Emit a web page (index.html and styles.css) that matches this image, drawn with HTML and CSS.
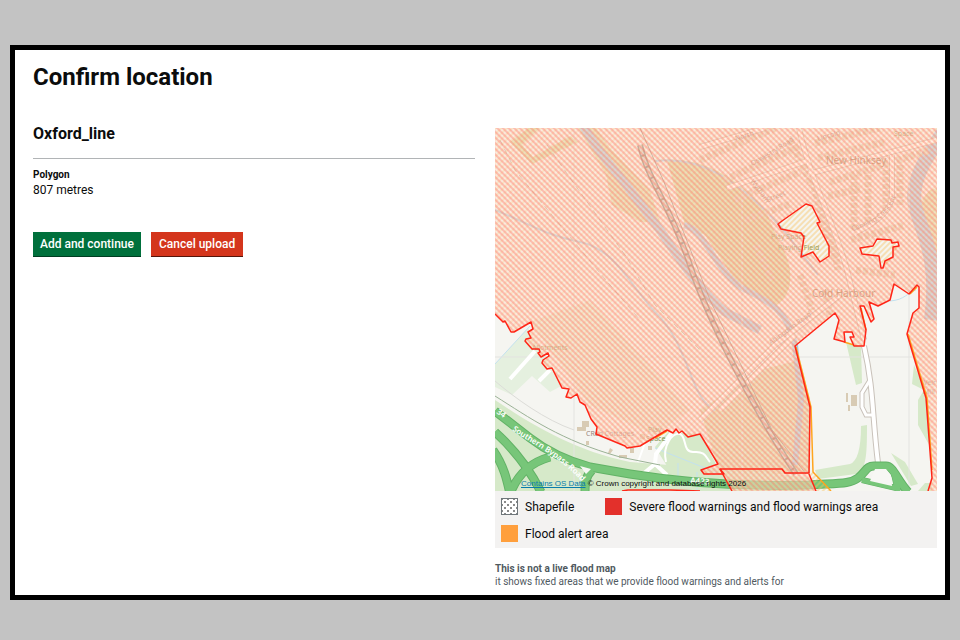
FILE: index.html
```html
<!DOCTYPE html>
<html lang="en">
<head>
<meta charset="utf-8">
<meta name="viewport" content="width=device-width, initial-scale=1">
<title>Confirm location</title>
<link rel="stylesheet" href="styles.css">
</head>
<body>
<main class="frame">
  <h1 class="title">Confirm location</h1>
  <div class="columns">
    <section class="details">
      <h2 class="name">Oxford_line</h2>
      <dl class="summary">
        <dt>Polygon</dt>
        <dd>807 metres</dd>
      </dl>
      <div class="actions">
        <button class="button" type="button">Add and continue</button>
        <button class="button button-warning" type="button">Cancel upload</button>
      </div>
    </section>
    <section class="location">
      <div class="map">
        <svg class="map-image" viewBox="495 128 442 363" preserveAspectRatio="xMidYMid slice" role="img" aria-label="Map of flood areas near New Hinksey and Cold Harbour">
          <defs>
            <pattern id="red-hatch" width="4" height="4" patternUnits="userSpaceOnUse" patternTransform="rotate(-45)">
              <rect width="2" height="4" fill="#ff6c62" opacity=".36"/>
            </pattern>
            <pattern id="orange-hatch" width="4" height="4" patternUnits="userSpaceOnUse" patternTransform="rotate(45)">
              <rect width="2" height="4" fill="#f8c060" opacity=".42"/>
            </pattern>
            <path id="flood" d="M495 128H937V491H928L932 478 926 398 907 334 913 313 919 308V287L917 285 909 294 894 284 890 300 878 306 869 302 874 319 871 322 864 307 860 306 866 330 864 346H854L850 337H854L852 333H844L845 342 834 339 839 320 835 313 795 346 810 407 809 474 816 491H732L720 469 724 475H704L701 470 718 464 700 434 688 437 682 431 679 433 676 429 673 433 667 430 640 446 627 448 625 446 596 434 597 427 591 419 585 405 580 402 577 394 571 398 566 397 569 389 562 388 552 368 547 369 542 363 543 360 549 356 548 353 541 357 538 353 540 352 539 349H532L525 341 526 339 531 338 528 332 533 329 531 322 514 332H511L505 321 503 322 495 314ZM778 224 782 221 806 204 812 206 820 222 817 223 829 246V256L820 262 813 252 801 257 804 237 801 233 781 229ZM860 248 873 246 877 239 891 240 892 243 898 242 899 246 893 247V257L885 261 883 268H881L879 256 862 254Z"/>
            <path id="southern" d="M512 430C532 445 558 454 584 484"/>
            <path id="abingdon" d="M771 345 819 310"/>
            <path id="norreys" d="M752 166 Q785 148 798 137"/>
            <path id="wytham" d="M750 181 766 203 790 193"/>
            <path id="canning" d="M852 231 Q887 222 896 196"/>
          </defs>
          <rect x="495" y="128" width="442" height="363" fill="#f5f5f1"/>

          <!-- green space -->
          <g fill="#d6e9c9">
            <path d="M510 142 528 128H540L522 145 533 157 570 136 578 142 532 164Z" fill="#d6dfa9"/>
            <path d="M578 128H596L610 148 650 190 660 222 640 222 612 205 606 175Z" fill="#d9dfb0"/>
            <path d="M667 160C700 158 735 175 765 209L778 240C795 265 795 295 775 306L735 280 705 235 685 225Z" fill="#d3dba4"/>
            <path d="M930 190 937 188V260L925 235C915 215 918 203 930 190Z" fill="#d9dfb0"/>
            <path d="M530 322 590 300 690 410 655 435 590 405Z" fill="#e6ebd8"/>
            <path d="M700 410 760 370 800 360 810 400V474H720Z" fill="#d9dfb8"/>
            <path d="M528 328 541 350 563 385 550 392 532 376 512 395 495 387V364Z" fill="#e5f0df"/>
            <path d="M495 400C525 420 570 450 630 462L760 472 809 478V491H495Z"/>
            <path d="M846 342 861 346 862 383 856 385Z"/>
            <path d="M861 426 867 425C867 450 867 472 856 474L818 479 815 470 850 464Q861 460 861 426Z"/>
            <path d="M914 365 922 383 926 398 932 450 918 425 918 400 924 390 912 384Z"/>
            <path d="M891 453 905 462 918 484 911 486Z"/>
            <path d="M918 491 925 483 932 483V491Z"/>
            <path d="M668 432 700 434 716 464 700 470 667 466 655 447Z"/>
          </g>

          <!-- water -->
          <g fill="none" stroke="#a9c8e4" stroke-width="2">
            <path d="M583 125C596 150 615 170 630 190L660 230C680 260 704 295 725 312L760 330" stroke-width="9"/>
            <path d="M655 161C700 155 740 180 785 232L818 275"/>
            <path d="M684 225C705 230 712 265 740 287 765 300 788 308 795 345L801 400 795 465" stroke-width="6"/>
            <path d="M946 128C928 155 910 180 915 205S940 255 931 320" stroke-width="14"/>
            <path d="M495 210C530 224 545 235 580 242S630 285 655 312C690 345 690 400 715 410"/>
            <path d="M495 364 530 326M890 301C905 300 908 292 916 290M655 448 720 474M678 463V480M697 472V490" stroke="#c3e1ef" stroke-width="1"/>
          </g>

          <!-- grid -->
          <path d="M495 357H937M574 128V491M742 128V491M909 128V491" stroke="#e3e3e0" fill="none"/>

          <!-- houses -->
          <g fill="none" stroke="#ddd2bb" stroke-width="7" stroke-dasharray="5 2">
            <path d="M700 160 775 128M724 180 807 143M735 200 800 172M745 220 790 204M815 143 880 128M818 158 885 142M830 182 930 150M828 196 860 189"/>
            <path d="M854 175V230M868 175V225M886 170V210M900 165V205M812 180 835 260M790 140 812 185M830 225 838 270M851 240 905 225M856 270 895 275M756 245 772 280M800 275 812 310M825 290 830 315"/>
          </g>
          <g fill="#d8cbb4">
            <path d="M851 395H857V406H851ZM846 393H848V402H846ZM848 405H850V411H848Z"/>
            <path d="M582 421H589V427H582ZM577 427H586V431H577ZM586 441H589V445H586ZM610 448 613 450 610 454 608 453ZM619 455H627V458H619ZM630 448H634V453H630ZM640 434H645V439H640ZM648 446H652V450H648Z"/>
          </g>

          <!-- minor roads -->
          <g fill="none" stroke="#c9c2ba" stroke-width="6">
            <path d="M799 128C810 180 835 225 847 270L864 340"/>
            <path d="M700 147 765 128M727 188 810 160M808 174 937 140M892 155V195Q892 215 855 233"/>
            <path d="M700 420 775 345 840 295M720 410 795 335M864 346C874 390 872 415 878 463"/>
            <path d="M870 380 862 393V407L866 415H873" stroke-width="5"/>
          </g>
          <g fill="none" stroke="#fff" stroke-width="4">
            <path d="M799 128C810 180 835 225 847 270L864 340"/>
            <path d="M700 147 765 128M727 188 810 160M808 174 937 140M892 155V195Q892 215 855 233"/>
            <path d="M700 420 775 345 840 295M720 410 795 335M864 346C874 390 872 415 878 463"/>
            <path d="M870 380 862 393V407L866 415H873" stroke-width="3"/>
            <path d="M510 379 535 351M539 381 550 370"/>
            <path d="M643 474 655 464 656 454 673 431M655 464 667 475"/>
            <path d="M666 462C662 445 673 432 680 434S682 453 694 452 706 458 710 462M638 462 646 440" stroke-width="2"/>
          </g>
          <path d="M500 140 515 170 560 225 610 285 640 320M547 145 575 185 625 255 655 305 700 350" stroke="#b9aaa0" fill="none" stroke-dasharray="6 4"/>

          <!-- railway -->
          <path d="M640 145C648 180 670 205 690 265S760 420 796 474" fill="none" stroke="#77706c" stroke-width="6"/>
          <path d="M640 145C648 180 670 205 690 265S760 420 796 474" fill="none" stroke="#d4cec9" stroke-width="3" stroke-dasharray="10 2"/>
          <path d="M640 128 664 182 710 300 772 430 806 474" fill="none" stroke="#8a827e"/>

          <!-- trunk roads -->
          <path d="M495 396C530 418 560 440 620 457L660 465" fill="none" stroke="#9bb296"/>
          <g fill="none" stroke="#62b266" stroke-width="9">
            <path d="M495 411 530 438C548 452 568 461 590 467L630 474C680 482 740 487 809 485 840 483 850 484 858 478 866 472 866 466 874 466H886C893 466 896 478 908 492"/>
            <path d="M495 432C515 450 530 470 541 492"/>
            <path d="M493 450C504 466 507 480 510 494C516 478 528 463 550 457"/>
            <path d="M592 470C585 477 585 484 585 493"/>
            <path d="M862 480 900 489M893 470 898 491" stroke-width="6"/>
          </g>
          <g fill="none" stroke="#77c679" stroke-width="7">
            <path d="M495 411 530 438C548 452 568 461 590 467L630 474C680 482 740 487 809 485 840 483 850 484 858 478 866 472 866 466 874 466H886C893 466 896 478 908 492"/>
            <path d="M495 432C515 450 530 470 541 492"/>
            <path d="M493 450C504 466 507 480 510 494C516 478 528 463 550 457"/>
            <path d="M592 470C585 477 585 484 585 493"/>
            <path d="M862 480 900 489M893 470 898 491" stroke-width="5"/>
          </g>
          <path d="M580 466 591 469 586 474ZM875 469H886L891 475 892 486 870 481Z" fill="#f7f7f4"/>
          <path d="M495 381C515 398 545 420 574 430" fill="none" stroke="#dcdcd8"/>

          <!-- place names -->
          <g class="map-label">
            <text x="826" y="164" class="place">New Hinksey</text>
            <text x="812" y="297" class="place">Cold Harbour</text>
            <g fill="#7f9150">
              <text x="771" y="239">Play Space</text>
              <text x="778" y="250">Playing Field</text>
              <text x="894" y="136">Space</text>
              <text x="532" y="350">Allotments</text>
              <text x="648" y="432">Play</text>
              <text x="646" y="441">Space</text>
            </g>
            <text x="586" y="436">CRed Cottages</text>
            <text x="921" y="385">Weir</text>
            <text x="923" y="394">Mill</text>
            <text><textPath href="#abingdon">Abingdon Road</textPath></text>
            <text><textPath href="#norreys">Oswestry Road</textPath></text>
            <text><textPath href="#wytham">Wytham Street</textPath></text>
            <text><textPath href="#canning">Canning Crescent</textPath></text>
            <text x="736" y="141" transform="rotate(-18 736 141)">North</text>
            <text x="818" y="141" transform="rotate(-16 818 141)">Lincoln</text>
          </g>

          <!-- flood alert and flood warning areas -->
          <use href="#flood" fill="#ffe2cd" fill-opacity=".54" fill-rule="evenodd"/>
          <use href="#flood" fill="url(#orange-hatch)" fill-opacity=".5" fill-rule="evenodd"/>
          <path d="M778 224 806 204 812 206 820 222 829 246V256L820 262 813 252 801 257 804 237 781 229ZM860 248 873 246 877 239 891 240 899 246 893 257 883 268 879 256 862 254ZM809 474 813 472 831 491H816Z" fill="url(#orange-hatch)"/>
          <use href="#flood" fill="url(#red-hatch)" fill-rule="evenodd"/>
          <path d="M796 347 811 407 813 472 831 491M861 308 866 330M844 342 854 345M908 334 927 398 932 470M910 294 917 287M655 438 667 431" fill="none" stroke="#ffa51f" stroke-width="1.5"/>
          <g fill="none" stroke="#ff2618" stroke-width="1.5" stroke-linejoin="round">
            <path d="M495 314 503 322 505 321 511 332H514L531 322 533 329 528 332 531 338 526 339 525 341 532 349H539L540 352 538 353 541 357 548 353 549 356 543 360 542 363 547 369 552 368 562 388 569 389 566 397 571 398 577 394 580 402 585 405 591 419 597 427 596 434 625 446 627 448 640 446 667 430 673 433 676 429 679 433 682 431 688 437 700 434 718 464 701 470 704 474H724L720 469H782L785 473H809L810 407 795 346 835 313 839 320 834 339 845 342 844 332H852L854 337H850L854 346H864L866 330 860 306H864L871 322 874 319 869 302 878 306 890 300 894 284 909 294 917 285 919 287V308L913 313 907 334 926 398 932 478 928 491"/>
            <path d="M720 469 732 491M809 474 816 491M622 491 628 490H670L700 491"/>
            <path d="M778 224 782 221 806 204 812 206 820 222 817 223 829 246V256L820 262 813 252 801 257 804 237 801 233 781 229ZM860 248 873 246 877 239 891 240 892 243 898 242 899 246 893 247V257L885 261 883 268H881L879 256 862 254Z"/>
          </g>
          <text class="road-name"><textPath href="#southern">Southern Bypass Road</textPath></text>
          <text class="road-name" x="496" y="413" transform="rotate(35 496 413)">34</text>
          <text class="road-name" x="690" y="483" transform="rotate(5 690 483)">A423</text>
        </svg>
        <p class="attribution"><a href="#os-data">Contains OS Data</a> © Crown copyright and database rights 2026</p>
      </div>
      <ul class="legend">
        <li><span class="swatch swatch-shape"></span>Shapefile</li>
        <li><span class="swatch swatch-severe"></span>Severe flood warnings and flood warnings area</li>
        <li><span class="swatch swatch-alert"></span>Flood alert area</li>
      </ul>
      <p class="note"><strong>This is not a live flood map</strong><br>it shows fixed areas that we provide flood warnings and alerts for</p>
    </section>
  </div>
</main>
</body>
</html>
```
FILE: styles.css
```css
* {
  box-sizing: border-box;
}

body {
  margin: 0;
  padding: 45px 10px 40px;
  background: #c3c3c3;
  color: #0b0c0c;
  font-family: Roboto, "Liberation Sans", sans-serif;
  font-size: 12px;
  line-height: 16px;
}

h1, h2, p, dl, dd, ul {
  margin: 0;
  padding: 0;
}

.frame {
  padding: 12px 8px 7px 18px;
  border: 5px solid #000;
  background: #fff;
}

.title {
  font-size: 24px;
  line-height: 30px;
}

.columns {
  display: grid;
  grid-template-columns: 1fr 1fr;
  gap: 20px;
  margin-top: 36px;
}

.name {
  padding-bottom: 18px;
  border-bottom: 1px solid #b1b4b6;
  font-size: 16px;
  line-height: 12px;
}

.summary {
  margin-top: 8px;
}

.summary dt {
  font-size: 10px;
  font-weight: 700;
  line-height: 16px;
}

.summary dd {
  line-height: 14px;
}

.actions {
  display: flex;
  gap: 10px;
  margin-top: 35px;
}

.button {
  padding: 4px 7px 5px;
  border: 0;
  box-shadow: inset 0 -1px 0 #003d22;
  background: #00703c;
  color: #fff;
  font: 500 12px/16px Roboto, "Liberation Sans", sans-serif;
}

.button-warning {
  padding-right: 8px;
  padding-left: 8px;
  background: #d4351c;
  box-shadow: inset 0 -1px 0 #55150b;
}

.map {
  position: relative;
}

.map-image {
  display: block;
  width: 100%;
  aspect-ratio: 442 / 363;
}

.map-label {
  fill: #99857a;
  font: 7px "Noto Sans", sans-serif;
}

.place {
  fill: #8a6a48;
  font-size: 10px;
}

.road-name {
  fill: #fff;
  font: 600 8px "Noto Sans", sans-serif;
}

.attribution {
  position: absolute;
  bottom: 1px;
  left: 26px;
  font: 8px/12px "Liberation Sans", Arial, sans-serif;
  white-space: nowrap;
}

.attribution a {
  color: #087cab;
}

.legend {
  display: flex;
  flex-wrap: wrap;
  gap: 10px 31px;
  padding: 7px 6px 6px;
  background: #f3f2f1;
  list-style: none;
}

.legend li {
  display: flex;
  align-items: center;
  gap: 7px;
}

.swatch {
  width: 17px;
  height: 17px;
}

.swatch-shape {
  border: 1px solid #6f777b;
  background-color: #fff;
  background-image: radial-gradient(#8a8a8a 1px, transparent 1px), radial-gradient(#8a8a8a 1px, transparent 1px);
  background-position: 0 0, 3px 3px;
  background-size: 6px 6px;
}

.swatch-severe {
  background: #e3302b;
}

.swatch-alert {
  background: #ff9f3c;
}

.note {
  margin-top: 14px;
  color: #505a5f;
  font-size: 10px;
  line-height: 13px;
}
```
